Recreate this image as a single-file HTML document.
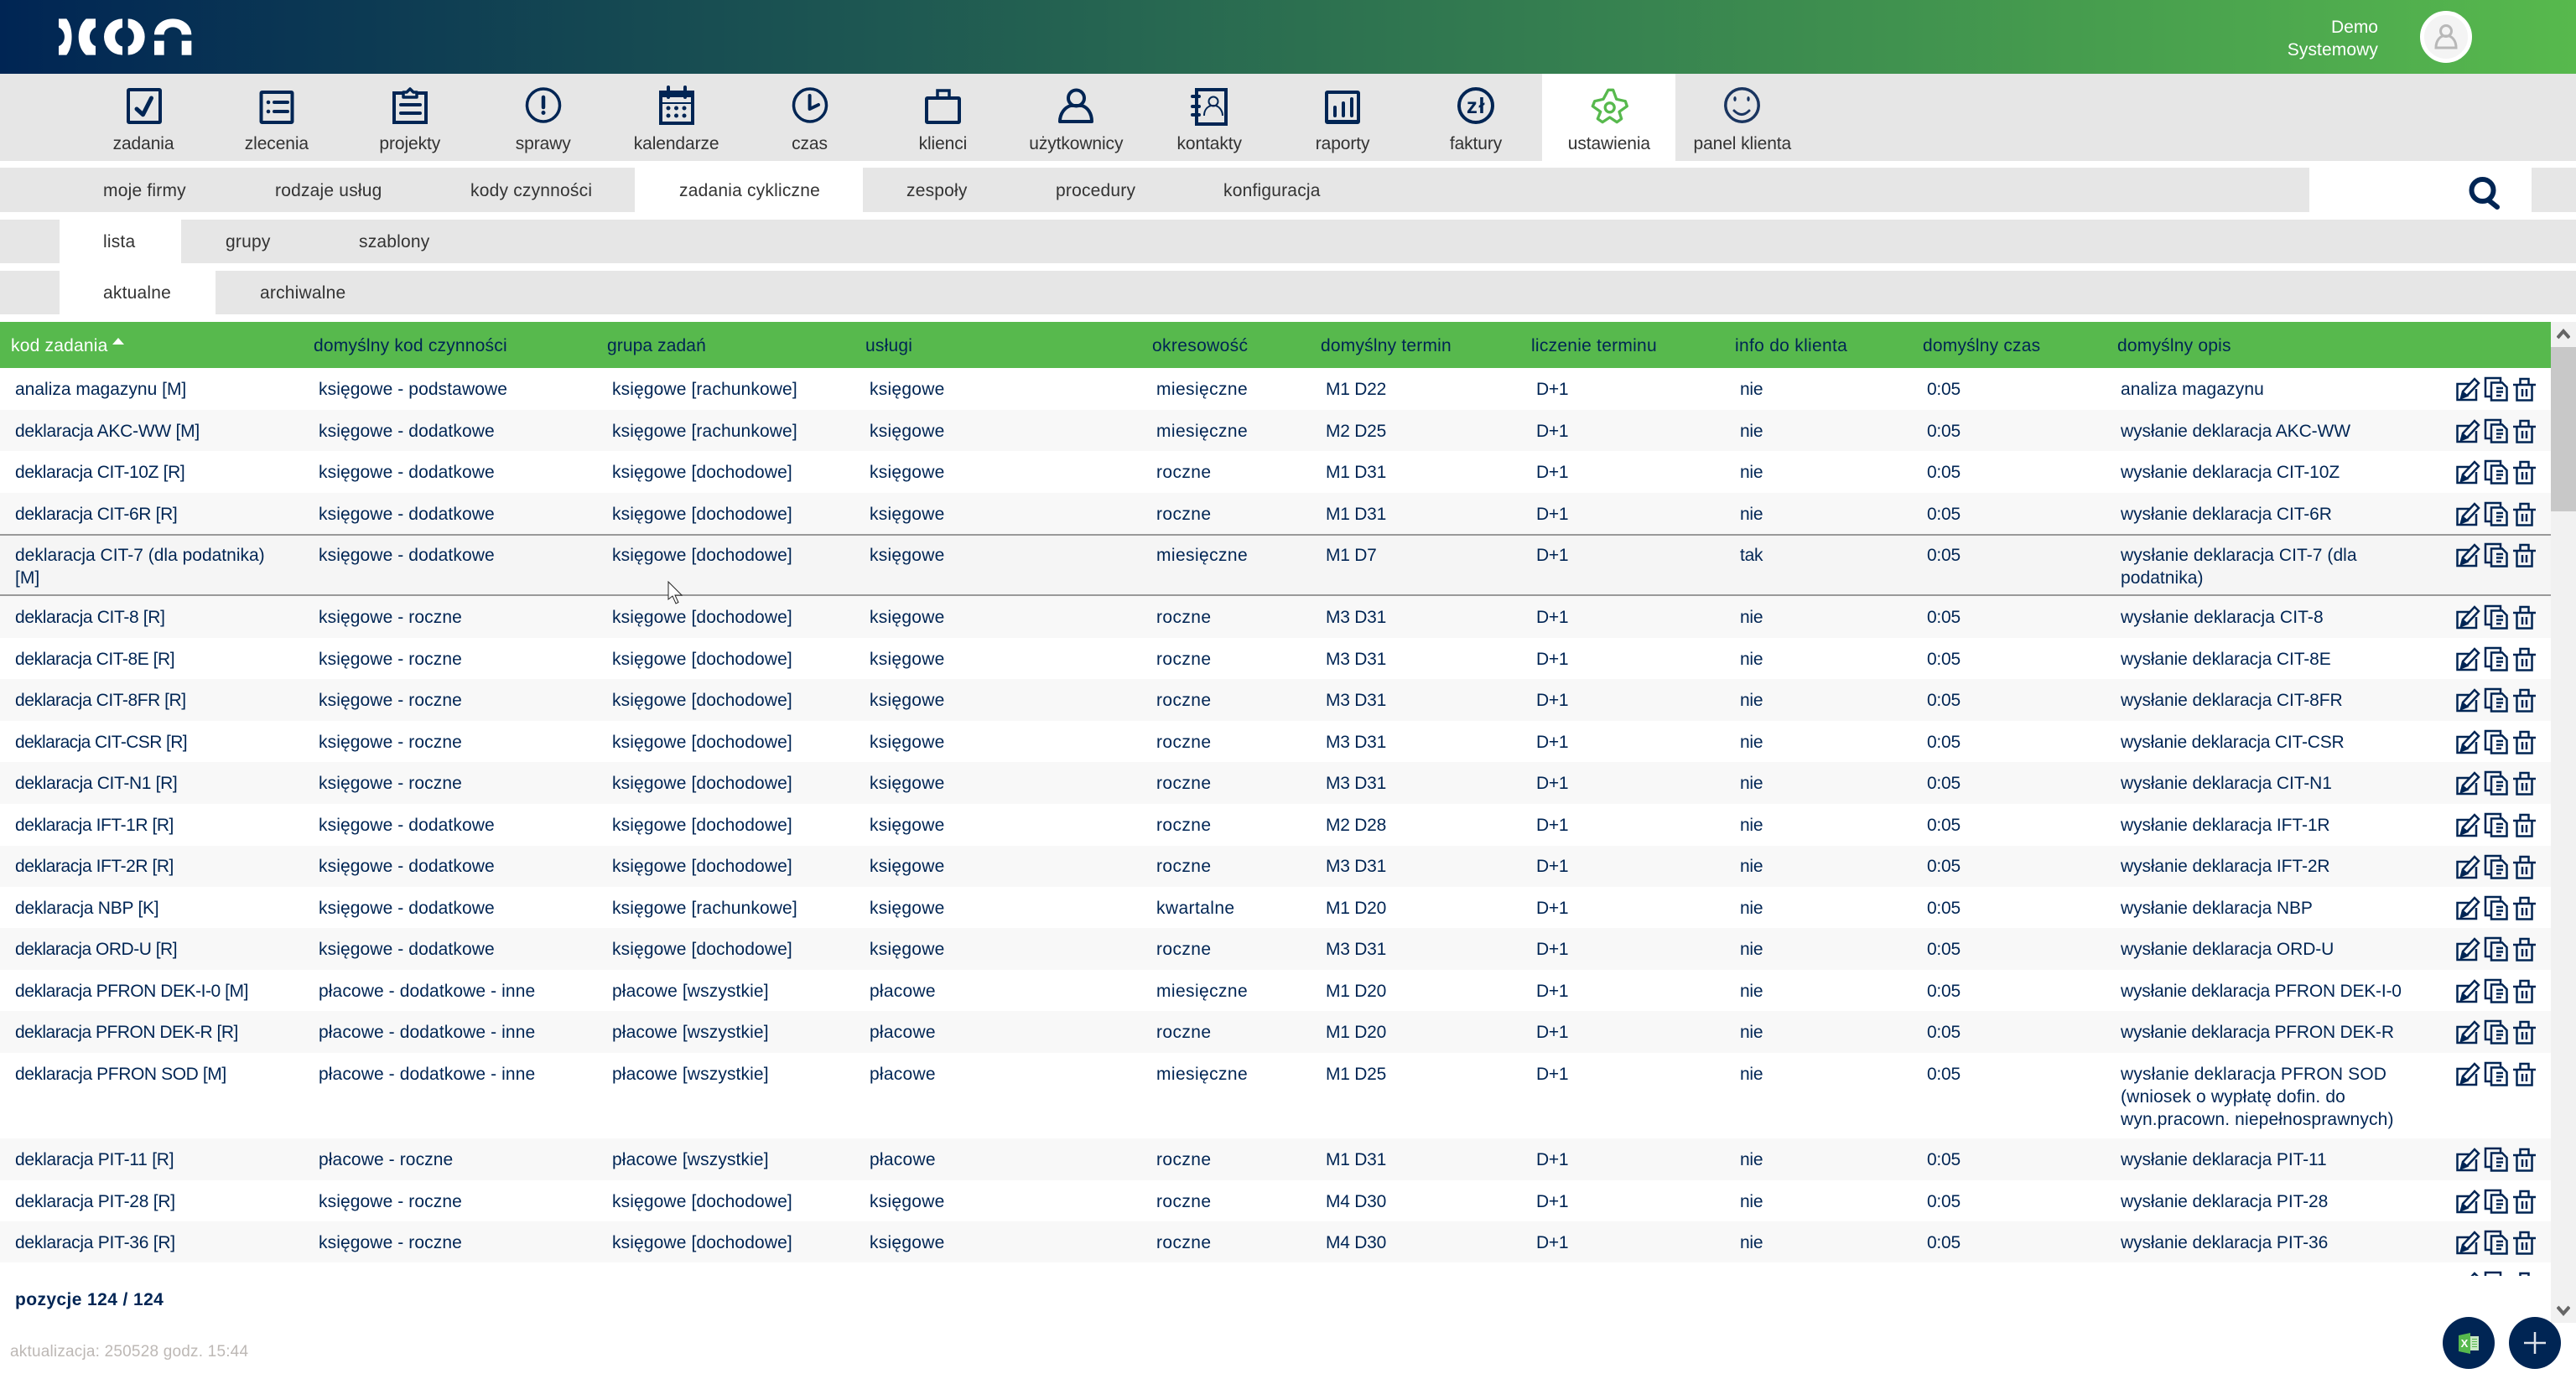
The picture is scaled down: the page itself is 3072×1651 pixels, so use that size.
<!DOCTYPE html>
<html lang="pl"><head><meta charset="utf-8"><title>Zadania cykliczne</title>
<style>
*{box-sizing:border-box}
html,body{margin:0;padding:0;width:3072px;height:1651px;overflow:hidden;background:#fff;font-family:"Liberation Sans",sans-serif;font-size:21px;color:#333}
.a{position:absolute}
.g{position:absolute;background:#e6e6e6}
.t{position:absolute;white-space:nowrap;line-height:28px;margin-top:-13px;letter-spacing:.2px}
.n{position:absolute;top:160px;width:159px;text-align:center;line-height:24px;white-space:nowrap;letter-spacing:-.1px}
.i{position:absolute;top:103px;width:44px;height:46px;overflow:visible;fill:none;stroke:#002554;stroke-width:4}
#hd{position:absolute;left:0;top:0;width:3072px;height:88px;background:linear-gradient(90deg,#002554,#57b94d)}
#th{position:absolute;left:0;top:384px;width:3042px;height:55px;background:#57b94d;color:#002554}
#th span{position:absolute;top:15px;line-height:28px;white-space:nowrap;letter-spacing:.2px}
#tb{position:absolute;left:0;top:439px;width:3042px;height:1083px;overflow:hidden;color:#002554}
.r{position:absolute;left:0;width:3042px;height:50px;background:#fff}
.r.e{background:#f8f8f8}
.r span{position:absolute;top:11.500px;line-height:27.3px;white-space:nowrap;letter-spacing:-.25px}
.r span:nth-child(1){left:18px}
.r span:nth-child(2){left:380px;letter-spacing:.1px}
.r span:nth-child(3){left:730px;letter-spacing:.12px}
.r span:nth-child(4){left:1037px;letter-spacing:.25px}
.r span:nth-child(5){left:1379px;letter-spacing:.4px}
.r span:nth-child(6){left:1581px}
.r span:nth-child(7){left:1832px}
.r span:nth-child(8){left:2075px}
.r span:nth-child(9){left:2298px}
.r span:nth-child(10){left:2529px;letter-spacing:-.1px}
.r svg{position:absolute;top:11px;width:28px;height:28px;overflow:visible;fill:none;stroke:#002554;stroke-width:2.500}
.r svg.x{left:2929px}.r svg.y{left:2963px}.r svg.z{left:2997px}
</style></head><body>
<svg width="0" height="0" style="position:absolute"><defs>
<g id="ed"><path d="M16 8H1.500V27H24V14"/><path d="M8 17L22 2L27 7L13 22L6.500 24Z"/><path d="M6 25L8 18L13 22Z" fill="#002554"/></g>
<g id="cp"><path d="M7 23H1V1H19V6"/><path d="M8 6.500H21L26.500 12V27.500H8Z"/><path d="M14 13H22M14 17.500H22M14 22H20"/></g>
<g id="tr"><path d="M0 9H27M8.500 9V2H18.500V9M4.500 9V27.500H22.500V9"/><path d="M11 14V23M16 14V23" stroke-width="2.500"/></g>
</defs></svg>

<div id="hd"></div>
<svg class="a" style="left:40px;top:0" width="220" height="90" viewBox="0 0 660 270" fill="#fff">
<path d="M90 67H118C143 98 143 166 118 197H90V165C118 155 118 110 90 98Z"/>
<path d="M222 67H188C152 98 152 166 188 197H222V165C194 155 194 110 222 98Z"/>
<path d="M318 67A66 65 0 0 0 318 197V166A32 34 0 0 1 318 99Z"/>
<path d="M338 67A60 65 0 0 1 338 197V166A26 34 0 0 0 338 99Z"/>
<path d="M432 124C432 90 462 67 498 67C535 67 565 90 565 124H530C530 108 516 97 498 97C481 97 467 108 467 124Z"/>
<rect x="432" y="146" width="35" height="51"/><rect x="530" y="146" width="35" height="51"/>
</svg>
<div class="t" style="right:236px;top:32px;color:#fff;letter-spacing:0">Demo</div>
<div class="t" style="right:236px;top:59px;color:#fff;letter-spacing:.1px">Systemowy</div>
<div class="a" style="left:2886px;top:13px;width:62px;height:62px;border-radius:50%;background:#f4f4f4;border:5px solid #fff"></div>
<svg class="a" style="left:2902px;top:28px;overflow:visible" width="30" height="32" viewBox="0 0 30 32" fill="none" stroke="#b8b8b8" stroke-width="3"><circle cx="15" cy="9" r="6.500"/><path d="M3 29C3 20 8 16 11 15H19C22 16 27 20 27 29Z"/></svg>

<div class="g" style="left:0;top:88px;width:3072px;height:104px"></div>
<div class="a" style="left:1839px;top:88px;width:159px;height:104px;background:#fff"></div>

<div class="n" style="left:91.500px">zadania</div>
<div class="n" style="left:250.400px">zlecenia</div>
<div class="n" style="left:409.300px">projekty</div>
<div class="n" style="left:568.200px">sprawy</div>
<div class="n" style="left:727.100px">kalendarze</div>
<div class="n" style="left:886px">czas</div>
<div class="n" style="left:1044.900px">klienci</div>
<div class="n" style="left:1203.800px">użytkownicy</div>
<div class="n" style="left:1362.700px">kontakty</div>
<div class="n" style="left:1521.600px">raporty</div>
<div class="n" style="left:1680.500px">faktury</div>
<div class="n" style="left:1839.400px">ustawienia</div>
<div class="n" style="left:1998.300px">panel klienta</div>

<svg class="i" style="left:150px" viewBox="0 0 44 46"><rect x="3" y="4" width="38" height="39" rx="1"/><path d="M13 27L20.500 33.700L30.500 14" stroke-width="5" stroke-linejoin="round" stroke-linecap="round"/></svg>
<svg class="i" style="left:308px" viewBox="0 0 44 46"><rect x="3.500" y="7" width="37" height="36" rx="1"/><path d="M19 19H35M19 30H35" stroke-linecap="round"/><circle cx="12" cy="19" r="2.300" fill="#002554" stroke="none"/><circle cx="12" cy="30" r="2.300" fill="#002554" stroke="none"/></svg>
<svg class="i" style="left:467px" viewBox="0 0 44 46"><path d="M13 8H3V43H41V8H31"/><path d="M14 13V7H18L22 3L26 7H30V13Z" stroke-width="3.500" stroke-linejoin="round"/><path d="M11 22H34M11 32H34" stroke-linecap="round"/></svg>
<svg class="i" style="left:626px" viewBox="0 0 44 46"><circle cx="22" cy="22.500" r="19.500" stroke-width="3.500"/><path d="M22 13V25" stroke-width="4.500" stroke-linecap="round"/><circle cx="22" cy="31.500" r="2.500" fill="#002554" stroke="none"/></svg>
<svg class="i" style="left:785px" viewBox="0 0 44 46"><rect x="3" y="7" width="38" height="37"/><path d="M3 11H41" stroke-width="4"/><path d="M3 20H41" stroke-width="2"/><path d="M12 1V13M32 1V13" stroke-linecap="round"/><g fill="#002554" stroke="none"><circle cx="12" cy="26" r="2.500"/><circle cx="21.500" cy="26" r="2.500"/><circle cx="31" cy="26" r="2.500"/><circle cx="12" cy="35" r="2.500"/><circle cx="21.500" cy="35" r="2.500"/><circle cx="31" cy="35" r="2.500"/></g></svg>
<svg class="i" style="left:944px" viewBox="0 0 44 46"><circle cx="22" cy="22.500" r="19.500" stroke-width="3.500"/><path d="M21.600 11V27L32 22" stroke-linecap="round" stroke-linejoin="round"/></svg>
<svg class="i" style="left:1103px" viewBox="0 0 44 46"><rect x="2" y="14" width="39" height="29" rx="1"/><path d="M15 14V5H29V14" stroke-width="3.500"/></svg>
<svg class="i" style="left:1262px" viewBox="0 0 44 46"><circle cx="21.500" cy="14" r="9.500"/><path d="M2 42C2 32 8 25 15 23H28C35 25 40 32 40 42Z" stroke-linejoin="round"/></svg>
<svg class="i" style="left:1421px" viewBox="0 0 44 46"><rect x="6" y="4" width="35" height="41"/><path d="M1 12H9M1 24H9M1 34H9" stroke-linecap="round"/><circle cx="26" cy="18" r="5.500" stroke-width="2"/><path d="M15 35C15 27 20 24 23 23H29C32 24 37 28 37 35" stroke-width="2"/></svg>
<svg class="i" style="left:1580px" viewBox="0 0 44 46"><rect x="2" y="7" width="38" height="36" rx="1"/><path d="M12 25V35M22 20V35M32 15V35" stroke-linecap="round"/><path d="M2 42H40" stroke-width="4"/></svg>
<svg class="i" style="left:1738px" viewBox="0 0 44 46"><circle cx="22" cy="23" r="20"/><text x="22.500" y="32" text-anchor="middle" font-family="Liberation Sans,sans-serif" font-weight="700" font-size="26" letter-spacing="1.500" fill="#002554" stroke="none">zł</text></svg>
<svg class="i" style="left:1899px;stroke:#57b94d;stroke-width:3.300" viewBox="0 0 44 46"><path d="M18.900 4.300H24.700L28.700 15.300L39.300 17.700L41.300 23.700L32 30.300L34.700 38.700L29.300 42.700L20.700 37L12 42.700L6.300 38.700L9.700 30.300L.3 23.700L2.700 17.700L13 15.300Z" stroke-linejoin="round"/><circle cx="20.700" cy="25.300" r="5.500"/></svg>
<svg class="i" style="left:2056px;stroke:#1a3560;stroke-width:3.500" viewBox="0 0 44 46"><circle cx="21.500" cy="22.500" r="19.700"/><ellipse cx="13" cy="15" rx="1.700" ry="3" fill="#1a3560" stroke="none"/><ellipse cx="29" cy="15" rx="1.700" ry="3" fill="#1a3560" stroke="none"/><path d="M12 29Q21 38 30 29" stroke-width="3" stroke-linecap="round"/></svg>

<div class="g" style="left:0;top:200px;width:757px;height:53px"></div>
<div class="g" style="left:1029px;top:200px;width:1725px;height:53px"></div>
<div class="g" style="left:3019px;top:200px;width:53px;height:53px"></div>
<div class="t" style="left:123px;top:227px">moje firmy</div>
<div class="t" style="left:328px;top:227px">rodzaje usług</div>
<div class="t" style="left:561px;top:227px">kody czynności</div>
<div class="t" style="left:810px;top:227px">zadania cykliczne</div>
<div class="t" style="left:1081px;top:227px">zespoły</div>
<div class="t" style="left:1259px;top:227px">procedury</div>
<div class="t" style="left:1459px;top:227px">konfiguracja</div>
<svg class="a" style="left:2940px;top:208px;overflow:visible" width="44" height="44" fill="none" stroke="#002554"><circle cx="20.500" cy="19" r="13" stroke-width="6"/><path d="M28 31L38 39" stroke-width="6" stroke-linecap="round"/></svg>

<div class="g" style="left:0;top:262px;width:71px;height:52px"></div>
<div class="g" style="left:216px;top:262px;width:2856px;height:52px"></div>
<div class="t" style="left:123px;top:288px">lista</div>
<div class="t" style="left:269px;top:288px">grupy</div>
<div class="t" style="left:428px;top:288px">szablony</div>

<div class="g" style="left:0;top:323px;width:71px;height:52px"></div>
<div class="g" style="left:257px;top:323px;width:2815px;height:52px"></div>
<div class="t" style="left:123px;top:349px">aktualne</div>
<div class="t" style="left:310px;top:349px">archiwalne</div>

<div id="th">
<span style="left:13px;color:#fff">kod zadania</span>
<svg class="a" style="left:134px;top:19px" width="14" height="8"><path d="M7 0L14 8H0Z" fill="#fff"/></svg>
<span style="left:374px">domyślny kod czynności</span>
<span style="left:724px;letter-spacing:.1px">grupa zadań</span>
<span style="left:1032px">usługi</span>
<span style="left:1374px;letter-spacing:.35px">okresowość</span>
<span style="left:1575px">domyślny termin</span>
<span style="left:1826px;letter-spacing:.25px">liczenie terminu</span>
<span style="left:2069px;letter-spacing:.3px">info do klienta</span>
<span style="left:2293px">domyślny czas</span>
<span style="left:2525px">domyślny opis</span>
</div>

<div id="tb">
<div class="r" style="top:0"><span style="letter-spacing:0">analiza magazynu [M]</span><span>księgowe - podstawowe</span><span>księgowe [rachunkowe]</span><span>księgowe</span><span>miesięczne</span><span>M1 D22</span><span>D+1</span><span>nie</span><span>0:05</span><span style="letter-spacing:.1px">analiza magazynu</span><svg class="x"><use href="#ed"/></svg><svg class="y"><use href="#cp"/></svg><svg class="z"><use href="#tr"/></svg></div>
<div class="r e" style="top:50px"><span>deklaracja AKC-WW [M]</span><span>księgowe - dodatkowe</span><span>księgowe [rachunkowe]</span><span>księgowe</span><span>miesięczne</span><span>M2 D25</span><span>D+1</span><span>nie</span><span>0:05</span><span>wysłanie deklaracja AKC-WW</span><svg class="x"><use href="#ed"/></svg><svg class="y"><use href="#cp"/></svg><svg class="z"><use href="#tr"/></svg></div>
<div class="r" style="top:99px"><span style="letter-spacing:-.35px">deklaracja CIT-10Z [R]</span><span>księgowe - dodatkowe</span><span>księgowe [dochodowe]</span><span>księgowe</span><span>roczne</span><span>M1 D31</span><span>D+1</span><span>nie</span><span>0:05</span><span>wysłanie deklaracja CIT-10Z</span><svg class="x"><use href="#ed"/></svg><svg class="y"><use href="#cp"/></svg><svg class="z"><use href="#tr"/></svg></div>
<div class="r e" style="top:149px"><span style="letter-spacing:-.35px">deklaracja CIT-6R [R]</span><span>księgowe - dodatkowe</span><span>księgowe [dochodowe]</span><span>księgowe</span><span>roczne</span><span>M1 D31</span><span>D+1</span><span>nie</span><span>0:05</span><span>wysłanie deklaracja CIT-6R</span><svg class="x"><use href="#ed"/></svg><svg class="y"><use href="#cp"/></svg><svg class="z"><use href="#tr"/></svg></div>
<div class="r" style="top:198px;height:74px;background:#f5f5f5;border-top:2px solid #999;border-bottom:2px solid #999"><span style="top:9.500px;letter-spacing:0">deklaracja CIT-7 (dla podatnika)<br>[M]</span><span style="top:9.500px">księgowe - dodatkowe</span><span style="top:9.500px">księgowe [dochodowe]</span><span style="top:9.500px">księgowe</span><span style="top:9.500px">miesięczne</span><span style="top:9.500px">M1 D7</span><span style="top:9.500px">D+1</span><span style="top:9.500px">tak</span><span style="top:9.500px">0:05</span><span style="top:9.500px;letter-spacing:.05px">wysłanie deklaracja CIT-7 (dla<br>podatnika)</span><svg class="x" style="top:9px"><use href="#ed"/></svg><svg class="y" style="top:9px"><use href="#cp"/></svg><svg class="z" style="top:9px"><use href="#tr"/></svg></div>
<div class="r e" style="top:272px"><span style="letter-spacing:-.35px">deklaracja CIT-8 [R]</span><span>księgowe - roczne</span><span>księgowe [dochodowe]</span><span>księgowe</span><span>roczne</span><span>M3 D31</span><span>D+1</span><span>nie</span><span>0:05</span><span style="letter-spacing:.1px">wysłanie deklaracja CIT-8</span><svg class="x"><use href="#ed"/></svg><svg class="y"><use href="#cp"/></svg><svg class="z"><use href="#tr"/></svg></div>
<div class="r" style="top:322px"><span style="letter-spacing:-.45px">deklaracja CIT-8E [R]</span><span>księgowe - roczne</span><span>księgowe [dochodowe]</span><span>księgowe</span><span>roczne</span><span>M3 D31</span><span>D+1</span><span>nie</span><span>0:05</span><span>wysłanie deklaracja CIT-8E</span><svg class="x"><use href="#ed"/></svg><svg class="y"><use href="#cp"/></svg><svg class="z"><use href="#tr"/></svg></div>
<div class="r e" style="top:371px"><span style="letter-spacing:-.45px">deklaracja CIT-8FR [R]</span><span>księgowe - roczne</span><span>księgowe [dochodowe]</span><span>księgowe</span><span>roczne</span><span>M3 D31</span><span>D+1</span><span>nie</span><span>0:05</span><span>wysłanie deklaracja CIT-8FR</span><svg class="x"><use href="#ed"/></svg><svg class="y"><use href="#cp"/></svg><svg class="z"><use href="#tr"/></svg></div>
<div class="r" style="top:421px"><span style="letter-spacing:-.6px">deklaracja CIT-CSR [R]</span><span>księgowe - roczne</span><span>księgowe [dochodowe]</span><span>księgowe</span><span>roczne</span><span>M3 D31</span><span>D+1</span><span>nie</span><span>0:05</span><span style="letter-spacing:-.2px">wysłanie deklaracja CIT-CSR</span><svg class="x"><use href="#ed"/></svg><svg class="y"><use href="#cp"/></svg><svg class="z"><use href="#tr"/></svg></div>
<div class="r e" style="top:470px"><span style="letter-spacing:-.35px">deklaracja CIT-N1 [R]</span><span>księgowe - roczne</span><span>księgowe [dochodowe]</span><span>księgowe</span><span>roczne</span><span>M3 D31</span><span>D+1</span><span>nie</span><span>0:05</span><span>wysłanie deklaracja CIT-N1</span><svg class="x"><use href="#ed"/></svg><svg class="y"><use href="#cp"/></svg><svg class="z"><use href="#tr"/></svg></div>
<div class="r" style="top:520px"><span style="letter-spacing:-.45px">deklaracja IFT-1R [R]</span><span>księgowe - dodatkowe</span><span>księgowe [dochodowe]</span><span>księgowe</span><span>roczne</span><span>M2 D28</span><span>D+1</span><span>nie</span><span>0:05</span><span>wysłanie deklaracja IFT-1R</span><svg class="x"><use href="#ed"/></svg><svg class="y"><use href="#cp"/></svg><svg class="z"><use href="#tr"/></svg></div>
<div class="r e" style="top:569.500px"><span style="letter-spacing:-.45px">deklaracja IFT-2R [R]</span><span>księgowe - dodatkowe</span><span>księgowe [dochodowe]</span><span>księgowe</span><span>roczne</span><span>M3 D31</span><span>D+1</span><span>nie</span><span>0:05</span><span>wysłanie deklaracja IFT-2R</span><svg class="x"><use href="#ed"/></svg><svg class="y"><use href="#cp"/></svg><svg class="z"><use href="#tr"/></svg></div>
<div class="r" style="top:619px"><span>deklaracja NBP [K]</span><span>księgowe - dodatkowe</span><span>księgowe [rachunkowe]</span><span>księgowe</span><span>kwartalne</span><span>M1 D20</span><span>D+1</span><span>nie</span><span>0:05</span><span>wysłanie deklaracja NBP</span><svg class="x"><use href="#ed"/></svg><svg class="y"><use href="#cp"/></svg><svg class="z"><use href="#tr"/></svg></div>
<div class="r e" style="top:668px"><span style="letter-spacing:-.5px">deklaracja ORD-U [R]</span><span>księgowe - dodatkowe</span><span>księgowe [dochodowe]</span><span>księgowe</span><span>roczne</span><span>M3 D31</span><span>D+1</span><span>nie</span><span>0:05</span><span>wysłanie deklaracja ORD-U</span><svg class="x"><use href="#ed"/></svg><svg class="y"><use href="#cp"/></svg><svg class="z"><use href="#tr"/></svg></div>
<div class="r" style="top:718px"><span style="letter-spacing:-.45px">deklaracja PFRON DEK-I-0 [M]</span><span>płacowe - dodatkowe - inne</span><span>płacowe [wszystkie]</span><span>płacowe</span><span>miesięczne</span><span>M1 D20</span><span>D+1</span><span>nie</span><span>0:05</span><span style="letter-spacing:-.22px">wysłanie deklaracja PFRON DEK-I-0</span><svg class="x"><use href="#ed"/></svg><svg class="y"><use href="#cp"/></svg><svg class="z"><use href="#tr"/></svg></div>
<div class="r e" style="top:767px"><span style="letter-spacing:-.5px">deklaracja PFRON DEK-R [R]</span><span>płacowe - dodatkowe - inne</span><span>płacowe [wszystkie]</span><span>płacowe</span><span>roczne</span><span>M1 D20</span><span>D+1</span><span>nie</span><span>0:05</span><span style="letter-spacing:-.22px">wysłanie deklaracja PFRON DEK-R</span><svg class="x"><use href="#ed"/></svg><svg class="y"><use href="#cp"/></svg><svg class="z"><use href="#tr"/></svg></div>
<div class="r" style="top:817px;height:103px"><span style="letter-spacing:-.4px">deklaracja PFRON SOD [M]</span><span>płacowe - dodatkowe - inne</span><span>płacowe [wszystkie]</span><span>płacowe</span><span>miesięczne</span><span>M1 D25</span><span>D+1</span><span>nie</span><span>0:05</span><span style="letter-spacing:.15px">wysłanie deklaracja PFRON SOD<br>(wniosek o wypłatę dofin. do<br>wyn.pracown. niepełnosprawnych)</span><svg class="x"><use href="#ed"/></svg><svg class="y"><use href="#cp"/></svg><svg class="z"><use href="#tr"/></svg></div>
<div class="r e" style="top:919px"><span>deklaracja PIT-11 [R]</span><span>płacowe - roczne</span><span>płacowe [wszystkie]</span><span>płacowe</span><span>roczne</span><span>M1 D31</span><span>D+1</span><span>nie</span><span>0:05</span><span>wysłanie deklaracja PIT-11</span><svg class="x"><use href="#ed"/></svg><svg class="y"><use href="#cp"/></svg><svg class="z"><use href="#tr"/></svg></div>
<div class="r" style="top:969px"><span>deklaracja PIT-28 [R]</span><span>księgowe - roczne</span><span>księgowe [dochodowe]</span><span>księgowe</span><span>roczne</span><span>M4 D30</span><span>D+1</span><span>nie</span><span>0:05</span><span>wysłanie deklaracja PIT-28</span><svg class="x"><use href="#ed"/></svg><svg class="y"><use href="#cp"/></svg><svg class="z"><use href="#tr"/></svg></div>
<div class="r e" style="top:1018px"><span>deklaracja PIT-36 [R]</span><span>księgowe - roczne</span><span>księgowe [dochodowe]</span><span>księgowe</span><span>roczne</span><span>M4 D30</span><span>D+1</span><span>nie</span><span>0:05</span><span>wysłanie deklaracja PIT-36</span><svg class="x"><use href="#ed"/></svg><svg class="y"><use href="#cp"/></svg><svg class="z"><use href="#tr"/></svg></div>
<div class="r" style="top:1067px"><span>deklaracja PIT-4R [M]</span><span>księgowe - roczne</span><span>księgowe [dochodowe]</span><span>księgowe</span><span>roczne</span><span>M1 D20</span><span>D+1</span><span>nie</span><span>0:05</span><span>wysłanie deklaracja PIT-4R</span><svg class="x"><use href="#ed"/></svg><svg class="y"><use href="#cp"/></svg><svg class="z"><use href="#tr"/></svg></div>
</div>

<svg class="a" style="left:796px;top:693px" width="20" height="28" viewBox="0 0 20 28"><path d="M1 1V22L6 18L10 27L13 25.500L9 17H17Z" fill="#fff" stroke="#222" stroke-width="1"/></svg>

<div class="a" style="left:3042px;top:384px;width:30px;height:1194px;background:#f1f1f1"></div>
<div class="a" style="left:3042px;top:414px;width:30px;height:196px;background:#c8c8c8"></div>
<svg class="a" style="left:3049px;top:391px" width="16" height="14"><path d="M1 12L8 4L15 12" fill="none" stroke="#666" stroke-width="4"/></svg>
<svg class="a" style="left:3049px;top:1557px" width="16" height="14"><path d="M1 2L8 10L15 2" fill="none" stroke="#666" stroke-width="4"/></svg>

<div class="t" style="left:18px;top:1551px;color:#002554;font-weight:700;letter-spacing:.4px;margin-top:-14px">pozycje 124 / 124</div>
<div class="t" style="left:12px;top:1613px;color:#bdb8b5;font-size:19px;letter-spacing:.2px;margin-top:-14px">aktualizacja: 250528 godz. 15:44</div>

<div class="a" style="left:2913px;top:1571px;width:62px;height:62px;border-radius:50%;background:#002554"></div>
<svg class="a" style="left:2932px;top:1590px" width="24" height="25" viewBox="0 0 24 25"><path d="M0 3L14 0V25L0 22Z" fill="#57b94d"/><rect x="14" y="4" width="10" height="17" fill="#c9e8c5"/><path d="M16 7.500H22M16 10.500H22M16 13.500H22M16 16.500H22" stroke="#57b94d" stroke-width="1"/><text x="7" y="17" text-anchor="middle" font-family="Liberation Sans,sans-serif" font-weight="700" font-size="13" fill="#fff">X</text></svg>
<div class="a" style="left:2992px;top:1571px;width:62px;height:62px;border-radius:50%;background:#002554"></div>
<svg class="a" style="left:3010px;top:1589px" width="26" height="26"><path d="M13 0V26M0 13H26" stroke="#dfe3ea" stroke-width="2.500"/></svg>
</body></html>
